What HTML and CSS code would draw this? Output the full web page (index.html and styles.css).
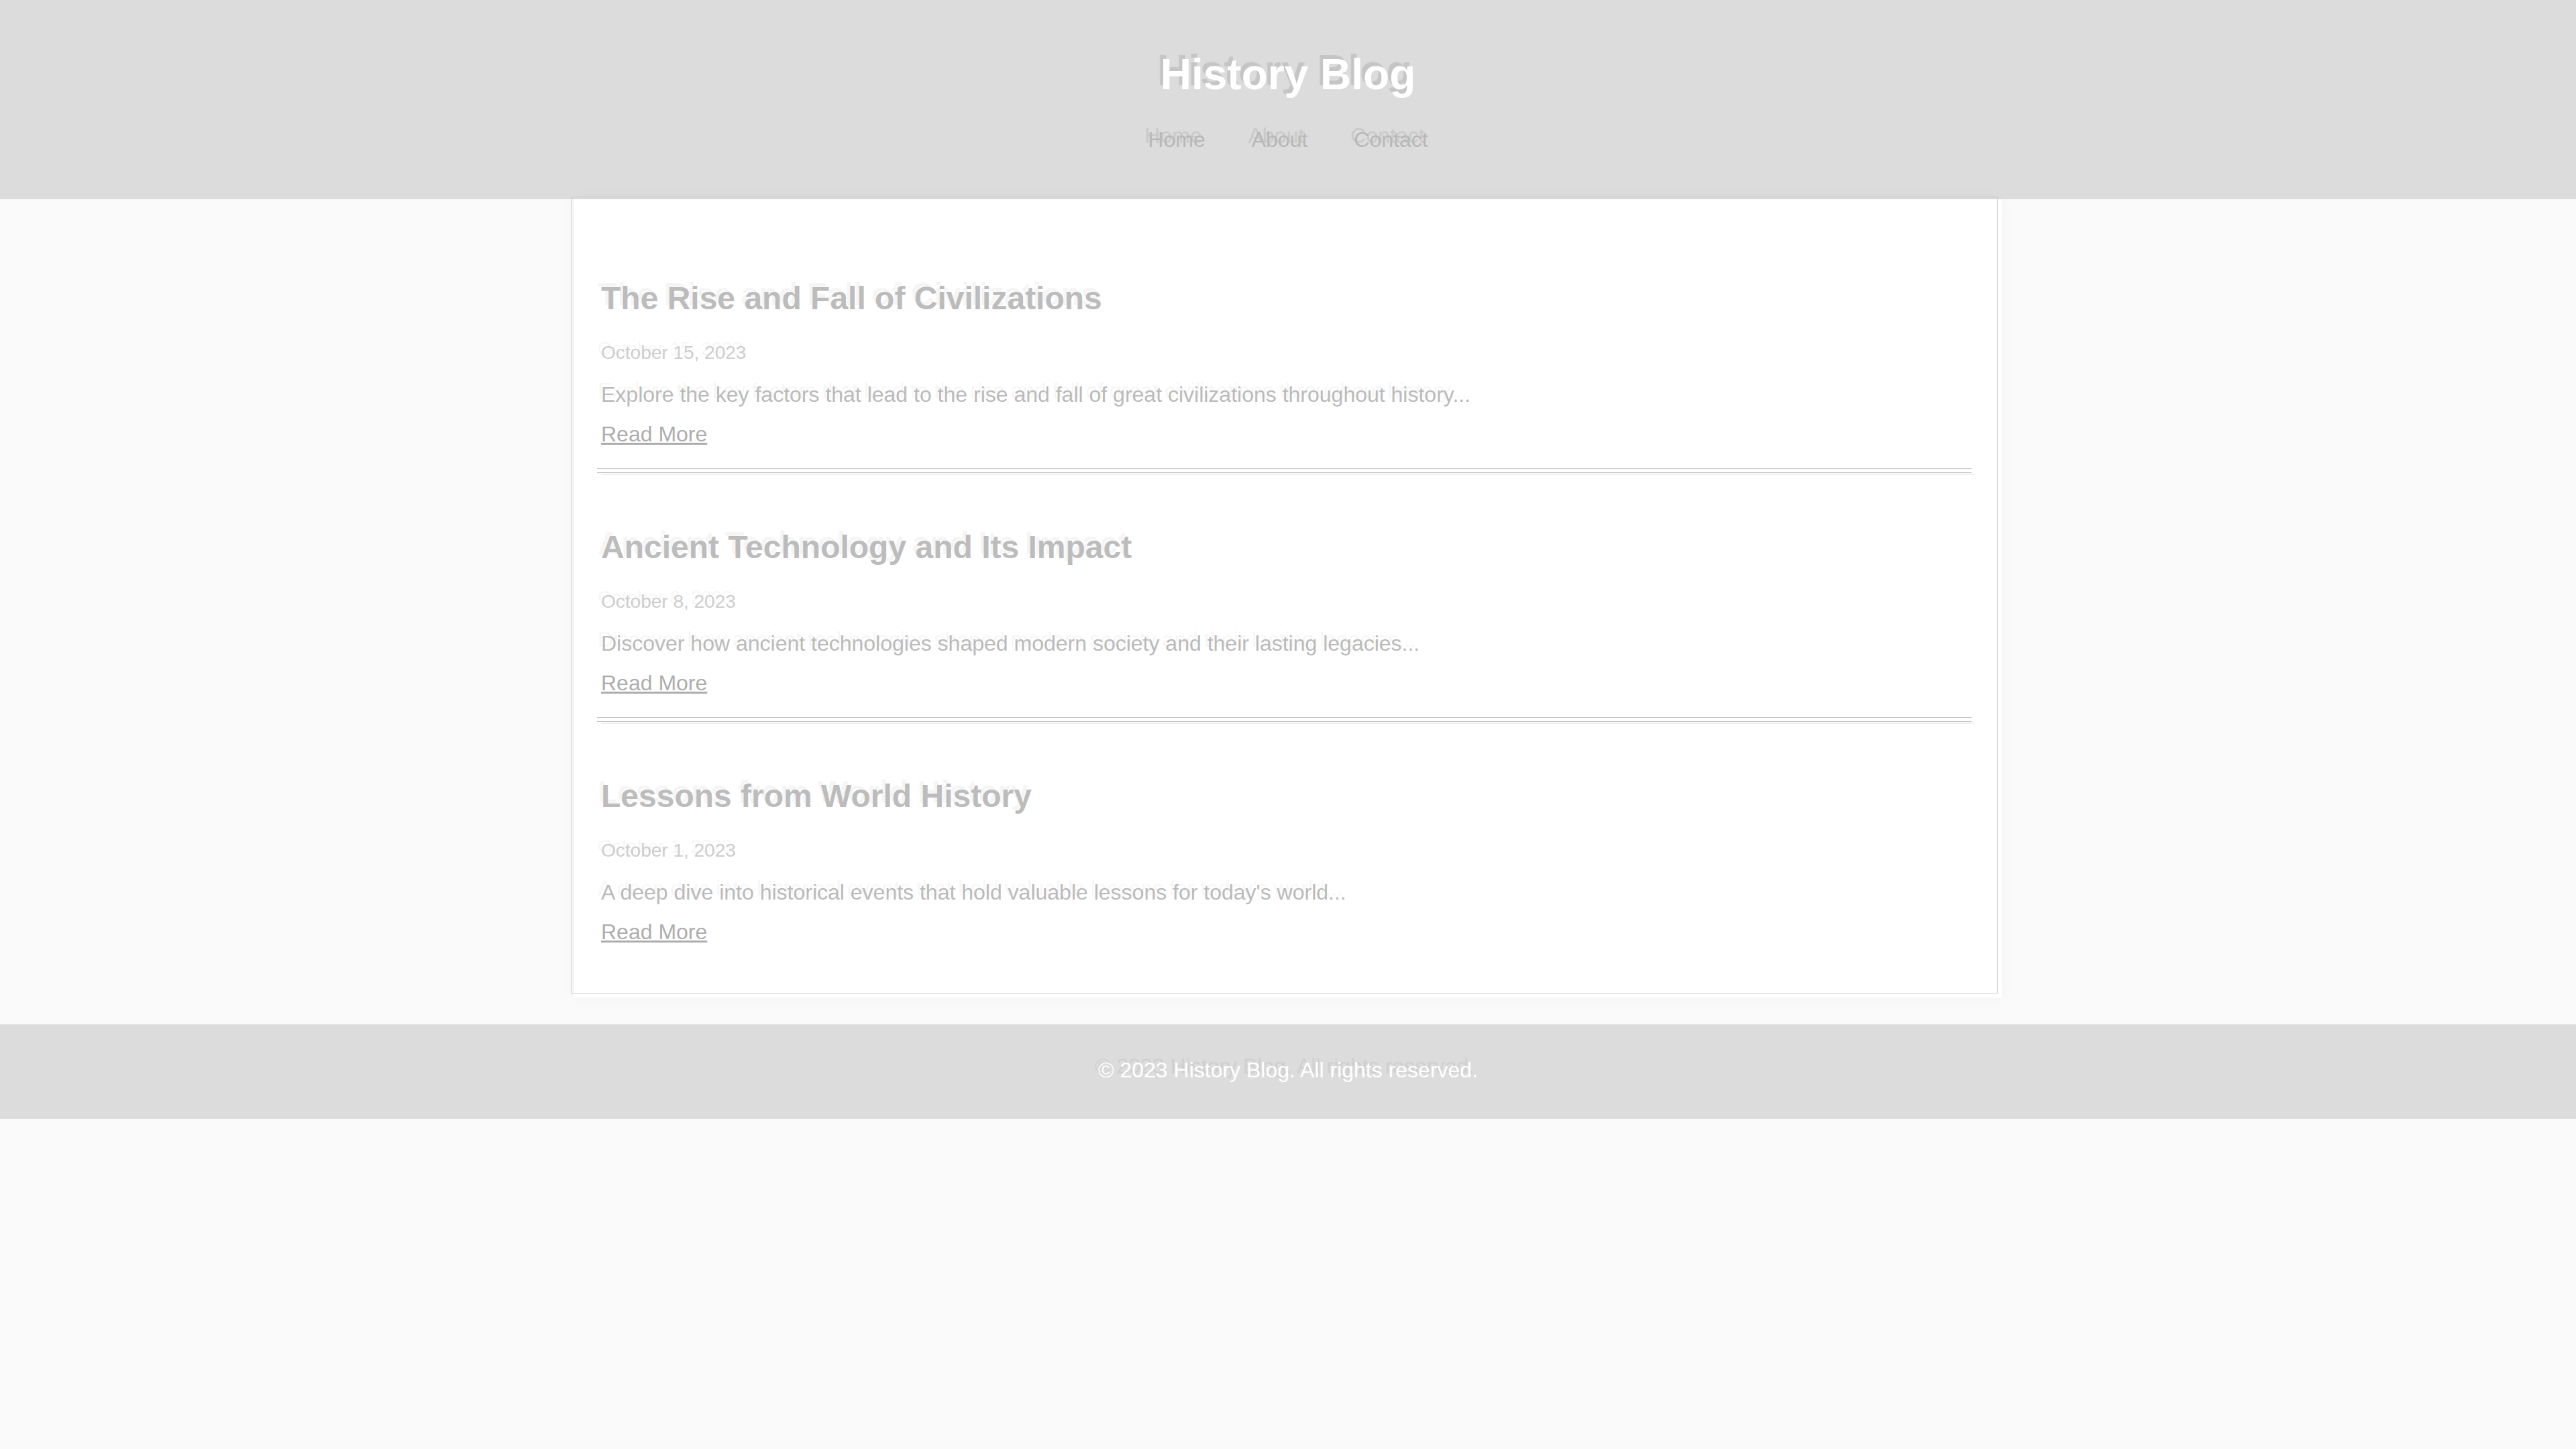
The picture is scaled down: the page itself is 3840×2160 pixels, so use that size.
FILE: index.html
```html
<!DOCTYPE html>
<html lang="en">
<head>
<meta charset="utf-8">
<title>History Blog</title>
<link rel="stylesheet" href="styles.css">
</head>
<body>
<header class="site-header">
  <h1 class="site-title">History Blog</h1>
  <nav class="site-nav">
    <a href="#" class="nav-link">Home</a>
    <a href="#" class="nav-link">About</a>
    <a href="#" class="nav-link">Contact</a>
  </nav>
</header>
<main class="card">
  <article class="post">
    <h2 class="post-title">The Rise and Fall of Civilizations</h2>
    <p class="post-date">October 15, 2023</p>
    <p class="post-excerpt">Explore the key factors that lead to the rise and fall of great civilizations throughout history...</p>
    <a href="#" class="read-more">Read More</a>
  </article>
  <article class="post">
    <h2 class="post-title">Ancient Technology and Its Impact</h2>
    <p class="post-date">October 8, 2023</p>
    <p class="post-excerpt">Discover how ancient technologies shaped modern society and their lasting legacies...</p>
    <a href="#" class="read-more">Read More</a>
  </article>
  <article class="post post-last">
    <h2 class="post-title">Lessons from World History</h2>
    <p class="post-date">October 1, 2023</p>
    <p class="post-excerpt">A deep dive into historical events that hold valuable lessons for today's world...</p>
    <a href="#" class="read-more">Read More</a>
  </article>
</main>
<footer class="site-footer">
  <p class="footer-text">&copy; 2023 History Blog. All rights reserved.</p>
</footer>
</body>
</html>
```

FILE: styles.css
```css
* {
  box-sizing: border-box;
}

html, body {
  margin: 0;
  padding: 0;
}

body {
  background: #fafafa;
  font-family: "Liberation Sans", Arial, sans-serif;
  min-height: 2160px;
}

.site-header {
  background: #dcdcdc;
  text-align: center;
  padding: 75px 0 71px;
}

.site-title {
  margin: 0;
  font-size: 64px;
  line-height: 72px;
  font-weight: bold;
  color: #ffffff;
  text-shadow: -5px -6px 1px rgba(0, 0, 0, 0.1);
}

.site-nav {
  margin-top: 43px;
  display: flex;
  justify-content: center;
  gap: 69px;
}

.nav-link {
  font-size: 32px;
  line-height: 36px;
  color: #b8b8b8;
  text-decoration: none;
  text-shadow: -5px -6px 1px rgba(0, 0, 0, 0.09);
}

.card {
  position: relative;
  width: 2128px;
  margin: 0 auto;
  background: #ffffff;
  padding: 40px;
  box-shadow: 0 0 22px rgba(0, 0, 0, 0.035);
}

.card::before {
  content: "";
  position: absolute;
  top: -4px;
  left: -5px;
  right: 6px;
  bottom: 6px;
  border: 1px solid #cfcfcf;
  pointer-events: none;
}

.post {
  position: relative;
  padding: 40px 0 41px;
  border-bottom: 2px solid #f1f1f1;
}

.post::after {
  content: "";
  position: absolute;
  left: -6px;
  right: 5px;
  bottom: 1px;
  height: 5px;
  border-top: 1px solid #c4c4c4;
  border-bottom: 1px solid #c4c4c4;
}

.post-last {
  border-bottom: none;
  padding-bottom: 40px;
}

.post-last::after {
  display: none;
}

.post-title {
  margin: 40px 0 37px;
  font-size: 48px;
  line-height: 56px;
  font-weight: bold;
  color: #bcbcbc;
  text-shadow: -5px -6px 1px rgba(0, 0, 0, 0.04);
}

.post-date {
  margin: 0 0 28px;
  font-size: 28px;
  line-height: 32px;
  color: #cdcdcd;
  text-shadow: -5px -6px 1px rgba(0, 0, 0, 0.04);
}

.post-excerpt {
  margin: 0 0 23px;
  font-size: 32px;
  line-height: 36px;
  color: #bababa;
  text-shadow: -5px -6px 1px rgba(0, 0, 0, 0.04);
}

.read-more {
  display: inline-block;
  font-size: 32px;
  line-height: 36px;
  color: #adadad;
  text-decoration: underline;
}

.site-footer {
  margin-top: 40px;
  background: #dcdcdc;
  text-align: center;
  padding: 48px 0 52px;
}

.footer-text {
  margin: 0;
  font-size: 32px;
  line-height: 41px;
  color: #ffffff;
  text-shadow: -5px -6px 1px rgba(0, 0, 0, 0.06);
}
```
